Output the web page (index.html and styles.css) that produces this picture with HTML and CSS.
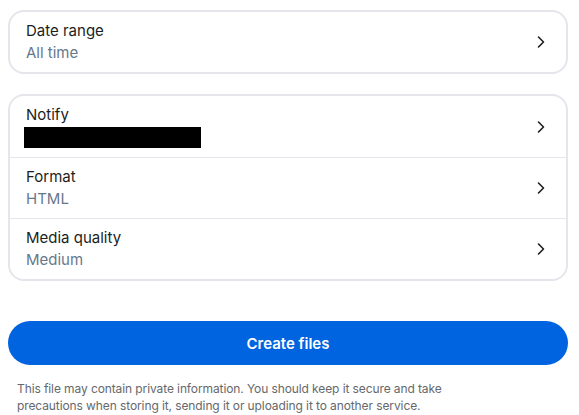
FILE: index.html
```html
<!DOCTYPE html>
<html>
<head>
<meta charset="utf-8">
<link rel="stylesheet" href="styles.css">
</head>
<body>
<div class="page">
  <div class="card">
    <div class="row">
      <div class="texts">
        <div class="label">Date range</div>
        <div class="value">All time</div>
      </div>
      <svg class="chev" width="10" height="14" viewBox="0 0 10 14"><path d="M2.5 2 L7.5 7 L2.5 12" fill="none" stroke="#1c1e21" stroke-width="1.6" stroke-linecap="round" stroke-linejoin="round"/></svg>
    </div>
  </div>
  <div class="card second">
    <div class="row">
      <div class="texts">
        <div class="label">Notify</div>
        <div class="redact"></div>
      </div>
      <svg class="chev" width="10" height="14" viewBox="0 0 10 14"><path d="M2.5 2 L7.5 7 L2.5 12" fill="none" stroke="#1c1e21" stroke-width="1.6" stroke-linecap="round" stroke-linejoin="round"/></svg>
    </div>
    <div class="row">
      <div class="texts">
        <div class="label">Format</div>
        <div class="value">HTML</div>
      </div>
      <svg class="chev" width="10" height="14" viewBox="0 0 10 14"><path d="M2.5 2 L7.5 7 L2.5 12" fill="none" stroke="#1c1e21" stroke-width="1.6" stroke-linecap="round" stroke-linejoin="round"/></svg>
    </div>
    <div class="row">
      <div class="texts">
        <div class="label">Media quality</div>
        <div class="value">Medium</div>
      </div>
      <svg class="chev" width="10" height="14" viewBox="0 0 10 14"><path d="M2.5 2 L7.5 7 L2.5 12" fill="none" stroke="#1c1e21" stroke-width="1.6" stroke-linecap="round" stroke-linejoin="round"/></svg>
    </div>
  </div>
  <button class="btn">Create files</button>
  <p class="note">This file may contain private information. You should keep it secure and take precautions when storing it, sending it or uploading it to another service.</p>
</div>
</body>
</html>
```
FILE: styles.css
```css
html, body {
  margin: 0;
  padding: 0;
  background: #ffffff;
}
body {
  font-family: Inter, "Noto Sans", sans-serif;
  color: #1c1e21;
}
.page {
  width: 560px;
  padding: 10px 0 0 8px;
}
.card {
  border: 2px solid #e4e6eb;
  border-radius: 16px;
  box-sizing: border-box;
}
.second {
  margin-top: 20px;
}
.row {
  display: flex;
  align-items: center;
  justify-content: space-between;
  height: 60px;
  padding: 0 20px 0 16px;
  box-sizing: border-box;
}
.second .row {
  height: 61px;
}
.row + .row {
  border-top: 1px solid #e4e6eb;
}
.texts {
  display: flex;
  flex-direction: column;
  gap: 2px;
}
.label {
  font-size: 15px;
  line-height: 20px;
  color: #1c1e21;
}
.value {
  font-size: 15px;
  line-height: 20px;
  color: #67788a;
}
.redact {
  width: 177px;
  height: 21px;
  background: #000;
  margin-left: -2px;
}
.chev {
  display: block;
}
.btn {
  display: block;
  width: 560px;
  height: 44px;
  margin-top: 40px;
  border: none;
  border-radius: 22px;
  background: #0064e0;
  color: #ffffff;
  font-family: Inter, "Noto Sans", sans-serif;
  font-size: 15px;
  font-weight: 600;
}
.note {
  width: 470px;
  margin: 15px 0 0 9px;
  font-size: 12px;
  line-height: 17px;
  letter-spacing: -0.1px;
  color: #65686c;
}
```
